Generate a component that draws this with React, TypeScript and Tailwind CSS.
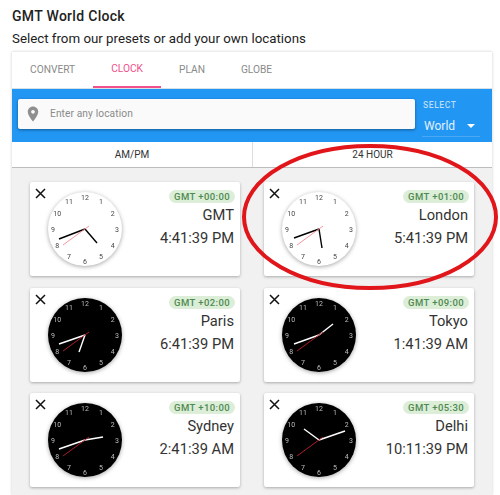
type Hand = [number, number];

const clocks: {
  zone: string;
  city: string;
  time: string;
  dark: boolean;
  hour: Hand;
  minute: Hand;
}[] = [
  { zone: "GMT +00:00", city: "GMT", time: "4:41:39 PM", dark: false, hour: [12, 14], minute: [-26, 10] },
  { zone: "GMT +01:00", city: "London", time: "5:41:39 PM", dark: false, hour: [3, 19], minute: [-25, 9] },
  { zone: "GMT +02:00", city: "Paris", time: "6:41:39 PM", dark: true, hour: [-6, 17], minute: [-26, 9] },
  { zone: "GMT +09:00", city: "Tokyo", time: "1:41:39 AM", dark: true, hour: [14, -11], minute: [-25, 9] },
  { zone: "GMT +10:00", city: "Sydney", time: "2:41:39 AM", dark: true, hour: [18, -3], minute: [-26, 9] },
  { zone: "GMT +05:30", city: "Delhi", time: "10:11:39 PM", dark: true, hour: [-15, -11], minute: [26, -9] },
];

// ── ClockFace ───────────────────────────────────────────────────────────────
function ClockFace({ dark, hour, minute }: { dark: boolean; hour: Hand; minute: Hand }) {
  const handColor = dark ? "#ffffff" : "#000000";
  return (
    <div className={`h-[74px] w-[74px] rounded-full shadow-[0_1px_4px_rgba(0,0,0,0.35)] ${dark ? "bg-black" : "bg-white"}`}>
      <svg width="74" height="74" viewBox="-37 -37 74 74">
        <g className="grayscale">
          {Array.from({ length: 12 }, (_, i) => {
            const n = i + 1;
            const a = (n * Math.PI) / 6;
            return (
              <text
                key={n}
                x={Math.sin(a) * 32}
                y={-Math.cos(a) * 32 + 2.5}
                textAnchor="middle"
                fontSize="7"
                fill={dark ? "#bdbdbd" : "#444444"}
              >
                {n}
              </text>
            );
          })}
        </g>
        <line x1="0" y1="0" x2={hour[0]} y2={hour[1]} stroke={handColor} strokeWidth="1.4" />
        <line x1="0" y1="0" x2={minute[0]} y2={minute[1]} stroke={handColor} strokeWidth="1.4" />
        <line x1="4" y1="-3" x2="-22" y2="16" stroke={dark ? "#c0202a" : "#f28b92"} strokeWidth="0.9" />
      </svg>
    </div>
  );
}

// ── ClockCard ───────────────────────────────────────────────────────────────
function ClockCard({ zone, city, time, dark, hour, minute }: (typeof clocks)[number]) {
  return (
    <div className="relative flex h-[94px] items-start justify-between rounded-[2px] bg-white pl-[18px] pr-[6px] pt-[10px] shadow-[0_1px_3px_rgba(0,0,0,0.3)]">
      <svg className="absolute left-[5px] top-[6px]" width="11" height="11" viewBox="0 0 11 11">
        <path d="M1 1L10 10M10 1L1 10" stroke="#111111" strokeWidth="1.5" fill="none" />
      </svg>
      <ClockFace dark={dark} hour={hour} minute={minute} />
      <div className="flex flex-col items-end">
        <span className="-mr-[1px] -mt-[2px] rounded-full bg-[#dcedd8] px-[5px] text-[9.5px] font-medium leading-[13px] tracking-[0.4px] text-[#4e8a50]">
          {zone}
        </span>
        <span className="mt-[1px] text-[14.7px] leading-[22px] text-[#333333]">{city}</span>
        <span className="mt-[1px] text-[14.7px] leading-[22px] text-[#333333]">{time}</span>
      </div>
    </div>
  );
}

export default function App() {
  return (
    <div className="relative h-[495px] w-[500px] overflow-hidden bg-white pl-3 pr-[8px] font-['Roboto',sans-serif] text-[#222222]">
      <h1 className="pt-[8px] text-[14px] font-medium leading-[16px] tracking-[0.3px]">GMT World Clock</h1>
      <p className="mt-[5px] text-[13.3px] leading-[20px]">Select from our presets or add your own locations</p>

      <div className="mt-[3px] shadow-[0_0_3px_rgba(0,0,0,0.2)]">
        {/* Tabs */}
        <div className="flex h-[37px] border-b border-[#d5dfe6] text-[10.2px] text-[#8a8a8a]">
          <div className="flex items-center px-[18px]">CONVERT</div>
          <div className="flex items-center border-b-2 border-[#f0508c] px-[18px] text-[#f0508c]">CLOCK</div>
          <div className="flex items-center px-[18px]">PLAN</div>
          <div className="flex items-center px-[18px]">GLOBE</div>
        </div>

        {/* Search bar */}
        <div className="flex h-[53px] items-start bg-[#2196f3] pl-[6px] pt-[10px]">
          <div className="flex h-[30px] w-[397px] items-center rounded-[2px] bg-[#fafafa] pl-[6px] shadow-[0_1px_3px_rgba(0,0,0,0.4)]">
            <svg width="18" height="18" viewBox="0 0 24 24" fill="#8f8f8f">
              <path d="M12 2C8.13 2 5 5.13 5 9c0 5.25 7 13 7 13s7-7.75 7-13c0-3.87-3.13-7-7-7zm0 9.5c-1.38 0-2.5-1.12-2.5-2.5s1.12-2.5 2.5-2.5 2.5 1.12 2.5 2.5-1.12 2.5-2.5 2.5z" />
            </svg>
            <span className="ml-[8px] text-[10.2px] tracking-[0.1px] text-[#8a8a8a]">Enter any location</span>
          </div>
          <div className="ml-[7px] w-[58px]">
            <div className="pl-[1px] text-[8.5px] font-medium leading-[12px] tracking-[0.6px] text-[#b9dcf9]">SELECT</div>
            <div className="mt-[5px] flex h-[21px] items-center border-b border-[#4aa8f5] pl-[2px] text-[12px] text-[#e3f1fd]">
              World
              <span className="ml-[12px] h-0 w-0 border-x-[4px] border-t-[4px] border-x-transparent border-t-white" />
            </div>
          </div>
        </div>

        {/* Format toggle */}
        <div className="grid h-[26px] grid-cols-2 border-b border-[#bdbdbd] text-[10px] text-[#333333]">
          <div className="flex items-center justify-center">AM/PM</div>
          <div className="flex items-center justify-center border-l border-[#dddddd]">24 HOUR</div>
        </div>

        {/* Clocks */}
        <div className="grid h-[327px] grid-cols-2 content-start gap-x-[24px] gap-y-[11.5px] bg-[#f1f1f1] pl-[18px] pr-[18px] pt-[14px]">
          {clocks.map(clock => (
            <ClockCard key={clock.city} {...clock} />
          ))}
        </div>
      </div>

      {/* Hand-drawn highlight round London */}
      <svg className="absolute left-0 top-0" width="500" height="495" viewBox="0 0 500 495" fill="none">
        <ellipse cx="370" cy="217" rx="126" ry="71" stroke="#e0161b" strokeWidth="4" />
      </svg>
    </div>
  );
}
